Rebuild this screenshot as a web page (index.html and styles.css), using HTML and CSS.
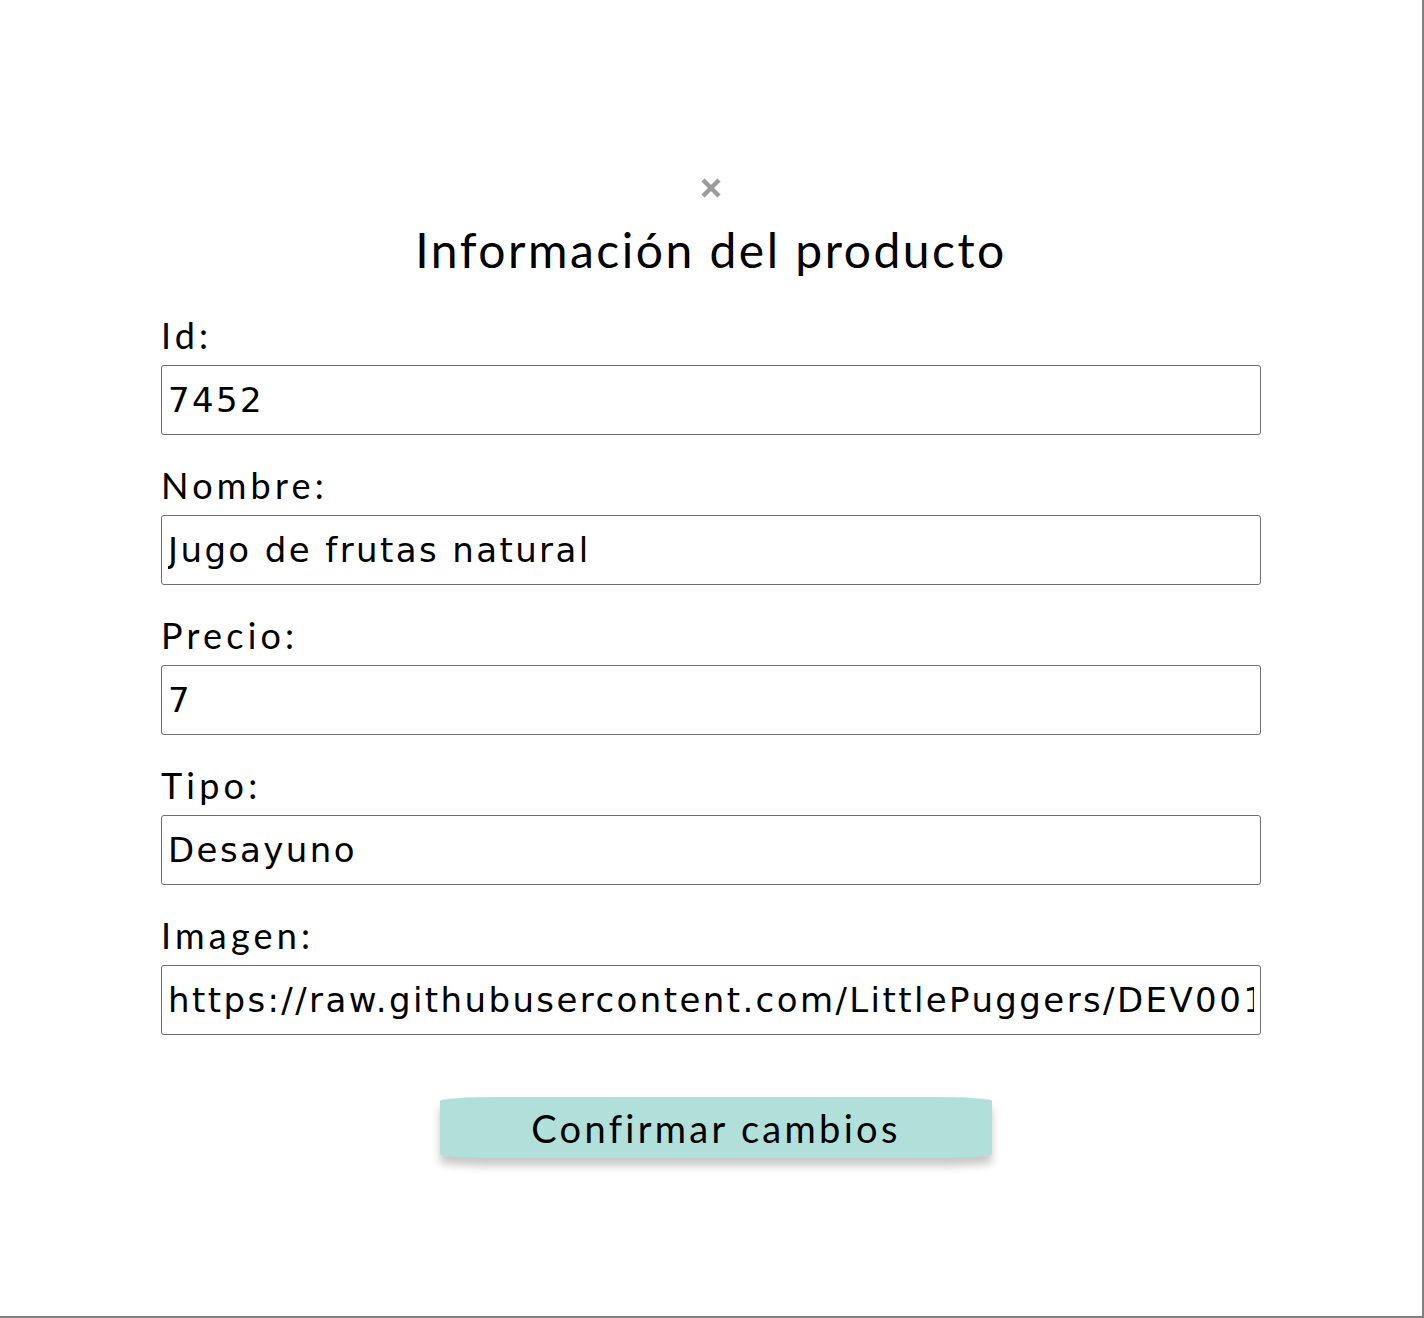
FILE: index.html
```html
<!DOCTYPE html>
<html lang="es">
<head>
<meta charset="utf-8">
<title>Información del producto</title>
<link rel="stylesheet" href="styles.css">
</head>
<body>
<div class="modal">
  <div class="content">
    <button class="close" type="button" aria-label="Cerrar">
      <svg width="22" height="22" viewBox="0 0 22 22"><path d="M3 3 L19 19 M19 3 L3 19" stroke="#9b9b9b" stroke-width="4.5" stroke-linecap="butt"/></svg>
    </button>
    <h2 class="title">Información del producto</h2>
    <form class="form">
      <label class="label">Id:</label>
      <input class="field" type="text" value="7452">
      <label class="label">Nombre:</label>
      <input class="field" type="text" value="Jugo de frutas natural">
      <label class="label">Precio:</label>
      <input class="field" type="text" value="7">
      <label class="label">Tipo:</label>
      <input class="field" type="text" value="Desayuno">
      <label class="label">Imagen:</label>
      <input class="field" type="text" value="https://raw.githubusercontent.com/LittlePuggers/DEV001-burger-queen-api-client/main/src/assets/jugo.png">
      <div class="actions">
        <button class="confirm" type="button">Confirmar cambios</button>
      </div>
    </form>
  </div>
</div>
</body>
</html>
```

FILE: styles.css
```css
html, body {
  margin: 0;
  padding: 0;
  background: #ffffff;
}

.modal {
  box-sizing: border-box;
  width: 1424px;
  height: 1318px;
  border-right: 2px solid #808080;
  border-bottom: 2px solid #808080;
  background: #ffffff;
}

.content {
  display: flex;
  flex-direction: column;
  align-items: center;
  padding-top: 177px;
}

.close {
  display: flex;
  border: none;
  background: none;
  padding: 0;
  margin: 0;
  width: 22px;
  height: 22px;
  cursor: pointer;
}

.title {
  margin: 22px 0 0;
  font-family: "Lato", "Open Sans", sans-serif;
  font-weight: 400;
  font-size: 48px;
  line-height: 58px;
  letter-spacing: 2.5px;
  color: #000000;
}

.form {
  display: flex;
  flex-direction: column;
  width: 1100px;
  margin-top: 34px;
}

.label {
  font-family: "Lato", "Open Sans", sans-serif;
  font-size: 36px;
  line-height: 44px;
  letter-spacing: 4.2px;
  color: #000000;
  margin: 28px 0 8px;
}

.label:first-child {
  margin-top: 0;
}

.field {
  box-sizing: border-box;
  width: 1100px;
  height: 70px;
  border: 1px solid #6f6f6f;
  border-radius: 3px;
  padding: 0 6px;
  font-family: "DejaVu Sans", sans-serif;
  font-size: 34px;
  letter-spacing: 2.4px;
  color: #000000;
  background: #ffffff;
  outline: none;
}

.actions {
  display: flex;
  justify-content: center;
  margin-top: 62px;
  padding-left: 10px;
}

.confirm {
  width: 552px;
  height: 61px;
  border: none;
  border-radius: 60px / 4px;
  background: #b0e0d9;
  box-shadow: 0 8px 8px rgba(0, 0, 0, 0.22);
  font-family: "Lato", "Open Sans", sans-serif;
  font-size: 38px;
  letter-spacing: 3.3px;
  color: #000000;
  padding: 0;
  cursor: pointer;
}
```
